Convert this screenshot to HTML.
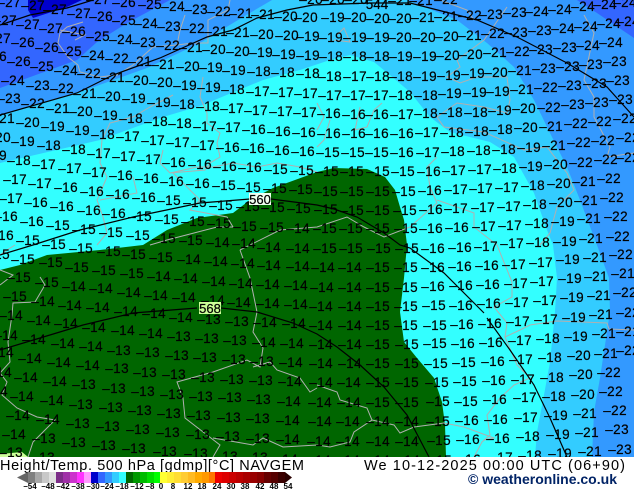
<!DOCTYPE html>
<html><head><meta charset="utf-8"><style>
html,body{margin:0;padding:0;background:#fff;width:634px;height:490px;overflow:hidden}
svg{display:block;font-family:"Liberation Sans",sans-serif}
</style></head><body>
<svg width="634" height="490" viewBox="0 0 634 490" xmlns="http://www.w3.org/2000/svg">
<defs><clipPath id="m"><rect width="634" height="457"/></clipPath></defs>
<g clip-path="url(#m)">
<rect width="634" height="457" fill="#3366ff"/>
<polygon fill="#0000cc" points="28,0 82,0 67,7 33,18 28,10"/>
<polygon fill="#3399ff" points="170,0 127,23 97,42 77,60 0,88 0,457 634,457 634,38 597,13 577,0"/>
<polygon fill="#33ccff" points="272,0 243,17 200,43 147,68 77,93 0,115 0,457 592,457 594,412 600,378 605,345 610,312 609,278 597,245 580,200 567,167 550,133 534,100 514,67 487,43 457,20 407,0"/>
<polygon fill="#33ffff" points="0,163 100,140 163,117 200,106 263,80 300,70 330,60 350,55 374,62 390,75 410,92 430,117 450,132 490,142 514,157 534,193 547,230 553,245 557,278 555,312 550,362 544,395 537,432 535,457 0,457"/>
<polygon fill="#006600" points="0,270 20,265 47,255 100,250 143,245 167,230 197,218 233,213 250,200 273,188 317,172 334,168 367,169 385,177 395,190 400,207 404,220 407,245 404,278 400,312 404,342 417,358 434,378 442,402 445,425 446,457 0,457"/>
<polygon fill="#ccff99" points="0,454 22,452 28,457 0,457"/>
<g fill="none" stroke="#b0b0b0" stroke-width="1">
<polyline points="83,22 67,27 60,33 58,43 68,57 78,65 80,72 100,77 117,75 133,65 153,47 177,45 193,43 208,43 208,20 228,10 230,0"/>
<polyline points="185,15 180,30 177,45"/>
<polyline points="173,95 150,107 133,117 110,123 102,140 100,163 107,177 97,200 103,217 107,233 97,245"/>
<polyline points="203,77 200,97 207,113 207,123 220,133 217,143 220,157 210,163 205,170 170,173 160,163 163,150"/>
<polyline points="170,173 197,167 213,167 233,163 257,167 277,163 300,167 317,172"/>
<polyline points="133,177 137,193 100,200"/>
<polyline points="173,173 190,190 200,200 190,210 227,217 233,227 217,227 167,240 150,245"/>
<polyline points="60,30 85,35 75,40"/>
<polyline points="440,0 467,10 474,20"/>
<polyline points="507,7 484,40 457,60 460,67 447,77 460,83 477,77 507,77 510,100 507,113 484,107 457,103 437,117 444,127 484,132 524,150 547,147 567,173 574,190 557,207 550,233 540,245"/>
<polyline points="584,15 594,33 584,80 594,97 594,117 610,147 607,157 634,153"/>
<polyline points="437,157 427,167 430,187 437,203 410,227 384,237 364,227 347,217 317,227 280,230 240,250"/>
<polyline points="437,200 474,213 474,227 497,245 512,282 512,297 494,307 507,323 505,337 517,365 530,378 514,385 500,398 487,415 490,435 482,442 474,457"/>
<polyline points="360,107 355,130 367,127 374,110 382,103"/>
<polyline points="317,103 324,117 317,130"/>
<polyline points="330,120 324,140 317,147"/>
<polyline points="337,35 344,28 350,42 334,40"/>
<polyline points="505,337 520,330 530,325 557,321 607,323 609,329 634,330"/>
<polyline points="317,385 337,392 340,400 367,408 372,420 354,432 350,442 330,447 317,445 283,447 263,438 253,445 213,438"/>
<polyline points="372,420 394,425 400,433 414,427 444,423 464,427 494,438 484,440"/>
<polyline points="40,277 45,285 35,302 13,303 12,315 8,342 10,362 0,373 7,382 2,395 17,408 37,417 55,420 33,442 28,457"/>
<polyline points="0,255 7,250 15,245"/>
<polyline points="0,270 13,275 0,285"/>
<polyline points="240,250 250,278 257,312 253,332 263,348 260,367 247,360 213,372 177,382 183,398 185,418 207,435 220,445 213,457"/>
<polyline points="253,367 270,362 277,370 300,378 310,392 317,388"/>
</g>
<g fill="none" stroke="#000" stroke-width="1.2">
<polyline points="0,25 30,15 67,8 93,0"/>
<polyline points="0,115 77,93 113,75 160,58 207,37 233,30 257,18 287,10 313,5 370,3 410,3 477,20 517,37 567,63 607,87 634,117"/>
<polyline points="0,255 33,245 80,230 133,217 200,203 250,199"/>
<polyline points="271,199 317,205 334,209 357,217 384,233 400,245 410,248 444,273 484,313"/>
<polyline points="487,318 510,350 534,385 550,418 567,457"/>
<polyline points="0,350 40,338 83,325 133,313 197,308"/>
<polyline points="221,308 257,312 293,323 317,334 337,347 360,365 384,387 407,415 429,457"/>
</g>
<g font-size="13.5" letter-spacing=".4" stroke="#000" stroke-width=".2" text-anchor="end" fill="#000">
<text x="110" y="4">–27</text><text x="136" y="7">–26</text><text x="162" y="9">–25</text><text x="185" y="11">–24</text><text x="208" y="14">–23</text><text x="231" y="16">–22</text><text x="253" y="18">–21</text><text x="275" y="19">–21</text><text x="298" y="21">–20</text><text x="318" y="22">–20</text><text x="345" y="22">–19</text><text x="367" y="22">–20</text><text x="390" y="23">–20</text><text x="412" y="23">–20</text><text x="435" y="22">–21</text><text x="458" y="21">–21</text><text x="482" y="20">–22</text><text x="503" y="19">–23</text><text x="527" y="17">–23</text><text x="549" y="16">–24</text><text x="572" y="14">–24</text><text x="595" y="11">–24</text><text x="617" y="9">–24</text><text x="637" y="7">–24</text>
<text x="323" y="4">–20</text><text x="345" y="4">–20</text><text x="368" y="4">–20</text><text x="412" y="5">–21</text><text x="433" y="5">–21</text><text x="458" y="4">–22</text>
<text x="21" y="7">–27</text><text x="45" y="10">–27</text><text x="67" y="14">–27</text><text x="91" y="18">–27</text><text x="113" y="21">–26</text><text x="136" y="25">–25</text><text x="158" y="28">–24</text><text x="181" y="31">–23</text><text x="205" y="33">–22</text><text x="228" y="36">–21</text><text x="250" y="37">–21</text><text x="274" y="39">–20</text><text x="299" y="40">–20</text><text x="320" y="41">–19</text><text x="343" y="42">–19</text><text x="367" y="42">–19</text><text x="390" y="42">–19</text><text x="412" y="42">–20</text><text x="436" y="42">–20</text><text x="459" y="41">–20</text><text x="482" y="40">–21</text><text x="505" y="38">–22</text><text x="528" y="37">–23</text><text x="552" y="35">–23</text><text x="575" y="33">–24</text><text x="598" y="31">–24</text><text x="621" y="28">–24</text><text x="640" y="26">–24</text>
<text x="17" y="25">–27</text><text x="40" y="29">–27</text><text x="63" y="33">–27</text><text x="86" y="36">–26</text><text x="110" y="41">–25</text><text x="133" y="44">–24</text><text x="156" y="47">–23</text><text x="180" y="50">–22</text><text x="203" y="52">–21</text><text x="226" y="54">–20</text><text x="250" y="56">–20</text><text x="273" y="57">–19</text><text x="296" y="59">–19</text><text x="320" y="60">–19</text><text x="343" y="61">–18</text><text x="367" y="61">–18</text><text x="390" y="61">–18</text><text x="413" y="61">–19</text><text x="437" y="61">–19</text><text x="460" y="60">–20</text><text x="483" y="59">–20</text><text x="507" y="57">–21</text><text x="530" y="56">–22</text><text x="553" y="54">–23</text><text x="577" y="52">–23</text><text x="600" y="50">–24</text><text x="623" y="47">–24</text>
<text x="11" y="43">–27</text><text x="35" y="47">–26</text><text x="59" y="52">–26</text><text x="82" y="56">–25</text><text x="105" y="60">–24</text><text x="129" y="63">–22</text><text x="152" y="66">–21</text><text x="175" y="69">–21</text><text x="200" y="71">–20</text><text x="223" y="72">–19</text><text x="246" y="75">–19</text><text x="271" y="76">–18</text><text x="295" y="77">–18</text><text x="320" y="78">–18</text><text x="342" y="81">–18</text><text x="367" y="81">–17</text><text x="390" y="81">–18</text><text x="413" y="81">–18</text><text x="437" y="81">–19</text><text x="461" y="80">–19</text><text x="485" y="78">–19</text><text x="508" y="77">–20</text><text x="532" y="75">–21</text><text x="556" y="73">–23</text><text x="580" y="71">–23</text><text x="603" y="69">–23</text><text x="627" y="66">–23</text>
<text x="7" y="61">–26</text><text x="31" y="66">–26</text><text x="54" y="71">–25</text><text x="78" y="75">–24</text><text x="101" y="78">–22</text><text x="125" y="82">–21</text><text x="149" y="85">–20</text><text x="173" y="87">–20</text><text x="197" y="90">–19</text><text x="221" y="92">–19</text><text x="245" y="94">–18</text><text x="270" y="96">–17</text><text x="294" y="97">–17</text><text x="318" y="98">–17</text><text x="342" y="100">–17</text><text x="366" y="100">–17</text><text x="389" y="100">–17</text><text x="413" y="100">–18</text><text x="438" y="100">–18</text><text x="462" y="98">–19</text><text x="487" y="97">–19</text><text x="510" y="96">–19</text><text x="534" y="94">–21</text><text x="558" y="92">–22</text><text x="582" y="90">–23</text><text x="607" y="88">–23</text><text x="630" y="85">–23</text>
<text x="25" y="85">–24</text><text x="50" y="90">–23</text><text x="74" y="93">–22</text><text x="97" y="98">–21</text><text x="121" y="101">–20</text><text x="146" y="103">–19</text><text x="171" y="107">–19</text><text x="195" y="109">–18</text><text x="220" y="111">–18</text><text x="244" y="113">–17</text><text x="268" y="115">–17</text><text x="293" y="116">–17</text><text x="317" y="117">–17</text><text x="341" y="118">–16</text><text x="366" y="119">–16</text><text x="389" y="119">–16</text><text x="414" y="119">–17</text><text x="438" y="118">–18</text><text x="463" y="117">–18</text><text x="488" y="117">–18</text><text x="512" y="115">–19</text><text x="536" y="113">–20</text><text x="561" y="112">–22</text><text x="585" y="109">–23</text><text x="609" y="107">–23</text><text x="633" y="104">–23</text>
<text x="21" y="103">–23</text><text x="45" y="108">–22</text><text x="70" y="113">–21</text><text x="93" y="116">–20</text><text x="118" y="120">–19</text><text x="143" y="123">–18</text><text x="168" y="126">–18</text><text x="192" y="128">–18</text><text x="217" y="131">–17</text><text x="241" y="132">–17</text><text x="266" y="134">–16</text><text x="291" y="136">–16</text><text x="316" y="137">–16</text><text x="341" y="138">–16</text><text x="366" y="138">–16</text><text x="389" y="138">–16</text><text x="414" y="138">–16</text><text x="439" y="137">–17</text><text x="464" y="137">–18</text><text x="489" y="136">–18</text><text x="513" y="134">–18</text><text x="538" y="132">–20</text><text x="563" y="131">–21</text><text x="588" y="128">–22</text><text x="612" y="126">–22</text><text x="637" y="123">–22</text>
<text x="15" y="123">–21</text><text x="40" y="127">–20</text><text x="65" y="131">–19</text><text x="90" y="135">–19</text><text x="115" y="139">–18</text><text x="140" y="141">–17</text><text x="165" y="145">–17</text><text x="190" y="147">–17</text><text x="215" y="150">–17</text><text x="240" y="152">–16</text><text x="265" y="153">–16</text><text x="290" y="155">–16</text><text x="315" y="156">–16</text><text x="340" y="157">–15</text><text x="365" y="157">–15</text><text x="389" y="157">–15</text><text x="414" y="157">–16</text><text x="440" y="157">–17</text><text x="465" y="156">–18</text><text x="491" y="155">–18</text><text x="516" y="154">–18</text><text x="541" y="152">–19</text><text x="566" y="150">–21</text><text x="591" y="147">–22</text><text x="615" y="145">–22</text><text x="640" y="142">–22</text>
<text x="11" y="142">–20</text><text x="35" y="146">–19</text><text x="61" y="150">–18</text><text x="86" y="154">–18</text><text x="111" y="158">–17</text><text x="136" y="161">–17</text><text x="161" y="164">–17</text><text x="186" y="167">–16</text><text x="212" y="169">–16</text><text x="237" y="171">–16</text><text x="262" y="172">–16</text><text x="288" y="174">–15</text><text x="314" y="175">–15</text><text x="339" y="176">–15</text><text x="364" y="176">–15</text><text x="390" y="176">–15</text><text x="415" y="176">–15</text><text x="441" y="176">–16</text><text x="466" y="175">–17</text><text x="492" y="174">–17</text><text x="517" y="173">–18</text><text x="543" y="171">–19</text><text x="568" y="169">–20</text><text x="593" y="167">–22</text><text x="618" y="164">–22</text><text x="640" y="162">–22</text>
<text x="7" y="160">–19</text><text x="31" y="165">–18</text><text x="56" y="169">–17</text><text x="82" y="173">–17</text><text x="107" y="177">–17</text><text x="133" y="180">–16</text><text x="159" y="183">–16</text><text x="184" y="186">–16</text><text x="210" y="188">–16</text><text x="236" y="190">–15</text><text x="261" y="192">–15</text><text x="287" y="193">–15</text><text x="313" y="194">–15</text><text x="338" y="196">–15</text><text x="364" y="196">–15</text><text x="390" y="196">–15</text><text x="416" y="196">–15</text><text x="442" y="195">–16</text><text x="468" y="194">–17</text><text x="493" y="193">–17</text><text x="519" y="192">–17</text><text x="545" y="190">–18</text><text x="571" y="188">–20</text><text x="596" y="186">–21</text><text x="621" y="183">–22</text>
<text x="27" y="184">–17</text><text x="52" y="188">–17</text><text x="78" y="192">–16</text><text x="104" y="196">–16</text><text x="130" y="199">–16</text><text x="156" y="202">–16</text><text x="181" y="205">–15</text><text x="207" y="207">–15</text><text x="233" y="210">–15</text><text x="260" y="211">–15</text><text x="285" y="212">–15</text><text x="311" y="213">–15</text><text x="338" y="214">–15</text><text x="364" y="215">–15</text><text x="390" y="215">–15</text><text x="417" y="215">–15</text><text x="443" y="214">–16</text><text x="468" y="213">–17</text><text x="495" y="212">–17</text><text x="521" y="211">–17</text><text x="547" y="209">–18</text><text x="573" y="207">–20</text><text x="598" y="205">–21</text><text x="624" y="202">–22</text>
<text x="23" y="203">–17</text><text x="48" y="207">–16</text><text x="74" y="211">–16</text><text x="101" y="215">–16</text><text x="126" y="218">–16</text><text x="152" y="221">–15</text><text x="179" y="224">–15</text><text x="205" y="226">–15</text><text x="231" y="228">–15</text><text x="257" y="231">–15</text><text x="284" y="232">–15</text><text x="310" y="233">–14</text><text x="337" y="233">–15</text><text x="363" y="233">–15</text><text x="390" y="233">–15</text><text x="418" y="233">–15</text><text x="443" y="233">–16</text><text x="469" y="232">–16</text><text x="496" y="231">–17</text><text x="522" y="230">–17</text><text x="549" y="228">–18</text><text x="575" y="226">–19</text><text x="601" y="223">–21</text><text x="628" y="221">–22</text>
<text x="18" y="221">–16</text><text x="44" y="226">–16</text><text x="70" y="230">–15</text><text x="96" y="234">–15</text><text x="123" y="237">–15</text><text x="150" y="240">–15</text><text x="176" y="243">–15</text><text x="203" y="245">–15</text><text x="230" y="247">–14</text><text x="256" y="248">–14</text><text x="281" y="252">–14</text><text x="310" y="253">–14</text><text x="337" y="253">–15</text><text x="363" y="253">–15</text><text x="391" y="253">–15</text><text x="419" y="253">–15</text><text x="445" y="253">–16</text><text x="472" y="252">–16</text><text x="498" y="251">–17</text><text x="524" y="248">–17</text><text x="550" y="247">–18</text><text x="577" y="246">–19</text><text x="603" y="243">–21</text><text x="630" y="241">–22</text>
<text x="14" y="240">–16</text><text x="40" y="245">–15</text><text x="66" y="249">–15</text><text x="93" y="253">–15</text><text x="121" y="256">–15</text><text x="146" y="259">–15</text><text x="173" y="262">–15</text><text x="201" y="264">–14</text><text x="228" y="266">–14</text><text x="255" y="268">–14</text><text x="281" y="270">–14</text><text x="310" y="271">–14</text><text x="335" y="272">–14</text><text x="362" y="272">–14</text><text x="390" y="272">–15</text><text x="418" y="272">–15</text><text x="445" y="272">–16</text><text x="472" y="271">–16</text><text x="499" y="270">–16</text><text x="526" y="269">–17</text><text x="553" y="267">–17</text><text x="580" y="264">–19</text><text x="607" y="262">–21</text><text x="633" y="259">–22</text>
<text x="10" y="259">–15</text><text x="35" y="264">–15</text><text x="63" y="267">–15</text><text x="89" y="272">–15</text><text x="116" y="275">–15</text><text x="144" y="278">–15</text><text x="171" y="281">–14</text><text x="198" y="283">–14</text><text x="226" y="286">–14</text><text x="253" y="288">–14</text><text x="280" y="289">–14</text><text x="308" y="290">–14</text><text x="334" y="292">–14</text><text x="362" y="292">–14</text><text x="390" y="292">–15</text><text x="418" y="292">–15</text><text x="445" y="291">–16</text><text x="473" y="290">–16</text><text x="500" y="289">–16</text><text x="528" y="288">–17</text><text x="554" y="286">–17</text><text x="582" y="283">–19</text><text x="608" y="281">–21</text><text x="635" y="278">–21</text>
<text x="31" y="282">–15</text><text x="59" y="287">–15</text><text x="86" y="291">–14</text><text x="113" y="293">–14</text><text x="141" y="297">–14</text><text x="168" y="300">–14</text><text x="196" y="302">–14</text><text x="225" y="305">–14</text><text x="251" y="307">–14</text><text x="280" y="308">–14</text><text x="308" y="309">–14</text><text x="333" y="311">–14</text><text x="362" y="311">–14</text><text x="390" y="311">–15</text><text x="418" y="311">–15</text><text x="446" y="310">–15</text><text x="473" y="310">–16</text><text x="501" y="308">–16</text><text x="529" y="307">–17</text><text x="557" y="305">–17</text><text x="584" y="302">–19</text><text x="611" y="300">–21</text><text x="637" y="297">–22</text>
<text x="27" y="301">–15</text><text x="55" y="306">–14</text><text x="82" y="310">–14</text><text x="110" y="312">–14</text><text x="138" y="316">–14</text><text x="166" y="318">–14</text><text x="193" y="322">–14</text><text x="221" y="324">–13</text><text x="249" y="326">–13</text><text x="277" y="327">–14</text><text x="306" y="328">–14</text><text x="333" y="330">–14</text><text x="362" y="330">–14</text><text x="390" y="330">–15</text><text x="418" y="330">–15</text><text x="447" y="330">–15</text><text x="474" y="329">–16</text><text x="502" y="328">–16</text><text x="530" y="326">–17</text><text x="558" y="324">–17</text><text x="586" y="322">–19</text><text x="613" y="319">–21</text><text x="640" y="317">–22</text>
<text x="23" y="320">–14</text><text x="51" y="325">–14</text><text x="78" y="328">–14</text><text x="106" y="332">–14</text><text x="135" y="335">–14</text><text x="163" y="338">–14</text><text x="191" y="341">–13</text><text x="219" y="343">–13</text><text x="247" y="345">–13</text><text x="276" y="347">–14</text><text x="304" y="348">–14</text><text x="333" y="349">–14</text><text x="362" y="349">–14</text><text x="390" y="349">–15</text><text x="419" y="349">–15</text><text x="447" y="348">–15</text><text x="475" y="348">–16</text><text x="503" y="347">–16</text><text x="532" y="345">–17</text><text x="560" y="343">–18</text><text x="588" y="341">–19</text><text x="616" y="338">–21</text><text x="640" y="336">–21</text>
<text x="18" y="340">–14</text><text x="46" y="344">–14</text><text x="75" y="348">–14</text><text x="103" y="351">–14</text><text x="131" y="355">–13</text><text x="160" y="357">–13</text><text x="189" y="360">–13</text><text x="217" y="362">–13</text><text x="246" y="364">–13</text><text x="274" y="366">–13</text><text x="303" y="367">–14</text><text x="333" y="368">–14</text><text x="362" y="368">–14</text><text x="390" y="368">–15</text><text x="419" y="368">–15</text><text x="448" y="368">–15</text><text x="476" y="367">–15</text><text x="505" y="366">–16</text><text x="533" y="364">–17</text><text x="562" y="362">–18</text><text x="591" y="360">–20</text><text x="618" y="358">–21</text><text x="640" y="355">–22</text>
<text x="14" y="357">–14</text><text x="42" y="363">–14</text><text x="71" y="367">–14</text><text x="100" y="370">–14</text><text x="129" y="373">–13</text><text x="157" y="377">–13</text><text x="186" y="379">–13</text><text x="215" y="382">–13</text><text x="244" y="384">–13</text><text x="273" y="385">–13</text><text x="302" y="386">–14</text><text x="333" y="387">–14</text><text x="361" y="387">–14</text><text x="390" y="387">–15</text><text x="419" y="387">–15</text><text x="449" y="387">–15</text><text x="477" y="386">–15</text><text x="506" y="385">–16</text><text x="535" y="384">–17</text><text x="564" y="382">–18</text><text x="593" y="379">–20</text><text x="621" y="377">–22</text>
<text x="12" y="377">–14</text><text x="38" y="382">–14</text><text x="67" y="386">–14</text><text x="96" y="389">–13</text><text x="126" y="393">–13</text><text x="155" y="396">–13</text><text x="184" y="399">–13</text><text x="213" y="401">–13</text><text x="242" y="402">–13</text><text x="271" y="404">–13</text><text x="301" y="406">–14</text><text x="332" y="407">–14</text><text x="361" y="407">–14</text><text x="390" y="407">–15</text><text x="419" y="407">–15</text><text x="450" y="406">–15</text><text x="478" y="406">–15</text><text x="507" y="404">–16</text><text x="537" y="402">–17</text><text x="566" y="401">–18</text><text x="595" y="399">–20</text><text x="623" y="396">–22</text>
<text x="8" y="396">–14</text><text x="34" y="401">–14</text><text x="64" y="405">–14</text><text x="93" y="409">–13</text><text x="123" y="412">–13</text><text x="152" y="415">–13</text><text x="181" y="418">–13</text><text x="211" y="420">–13</text><text x="241" y="422">–13</text><text x="270" y="423">–13</text><text x="300" y="425">–14</text><text x="332" y="426">–14</text><text x="360" y="426">–14</text><text x="390" y="426">–14</text><text x="419" y="426">–14</text><text x="450" y="426">–15</text><text x="479" y="425">–16</text><text x="508" y="424">–16</text><text x="538" y="422">–17</text><text x="568" y="420">–19</text><text x="597" y="418">–21</text><text x="627" y="415">–22</text>
<text x="30" y="420">–14</text><text x="60" y="424">–14</text><text x="90" y="428">–13</text><text x="120" y="431">–13</text><text x="150" y="434">–13</text><text x="180" y="437">–13</text><text x="210" y="439">–13</text><text x="240" y="441">–13</text><text x="270" y="443">–13</text><text x="300" y="444">–14</text><text x="331" y="446">–14</text><text x="360" y="446">–14</text><text x="390" y="446">–14</text><text x="419" y="446">–14</text><text x="451" y="445">–15</text><text x="480" y="444">–16</text><text x="510" y="443">–16</text><text x="540" y="441">–18</text><text x="570" y="439">–19</text><text x="599" y="437">–21</text><text x="629" y="434">–23</text>
<text x="26" y="439">–14</text><text x="56" y="443">–13</text><text x="86" y="447">–13</text><text x="116" y="450">–13</text><text x="146" y="453">–13</text><text x="177" y="456">–13</text><text x="208" y="458">–13</text><text x="238" y="461">–13</text><text x="268" y="462">–13</text><text x="298" y="464">–14</text><text x="331" y="465">–14</text><text x="360" y="465">–14</text><text x="390" y="465">–14</text><text x="420" y="465">–14</text><text x="452" y="465">–15</text><text x="481" y="464">–16</text><text x="513" y="462">–17</text><text x="542" y="460">–18</text><text x="572" y="458">–19</text><text x="602" y="456">–21</text><text x="632" y="454">–23</text>
<text x="23" y="457">–13</text><text x="55" y="462">–13</text>
</g>
<text x="377" y="9" font-size="13.5" stroke="#000" stroke-width=".2" text-anchor="middle">544</text>
<rect x="249" y="193" width="22" height="12" fill="#f0fff0"/>
<text x="260" y="204" font-size="13" stroke="#000" stroke-width=".2" text-anchor="middle">560</text>
<rect x="199" y="302" width="22" height="12" fill="#ccff99"/>
<text x="210" y="313" font-size="13" stroke="#000" stroke-width=".2" text-anchor="middle">568</text>
</g>
<rect y="457" width="634" height="33" fill="#fff"/>
<text x="0" y="470" font-size="14.5" textLength="304" lengthAdjust="spacing">Height/Temp. 500 hPa [gdmp][°C] NAVGEM</text>
<text x="364" y="470" font-size="14.5" textLength="261" lengthAdjust="spacing">We 10-12-2025 00:00 UTC (06+90)</text>
<text x="468" y="484" font-size="14" font-weight="bold" fill="#002366" textLength="149" lengthAdjust="spacing">© weatheronline.co.uk</text>
<polygon points="17,477.5 28,472 28,483" fill="#666"/>
<g>
<rect x="28" y="472" width="7" height="11" fill="#808080"/><rect x="35" y="472" width="7" height="11" fill="#a8a8a8"/><rect x="42" y="472" width="7" height="11" fill="#c8c8c8"/><rect x="49" y="472" width="7" height="11" fill="#e0e0e0"/>
<rect x="56" y="472" width="7" height="11" fill="#7c2d88"/><rect x="63" y="472" width="7" height="11" fill="#a030a8"/><rect x="70" y="472" width="7" height="11" fill="#cc33cc"/><rect x="77" y="472" width="7" height="11" fill="#ff33ff"/><rect x="84" y="472" width="7" height="11" fill="#ff99ff"/>
<rect x="91" y="472" width="7" height="11" fill="#0000cc"/><rect x="98" y="472" width="7" height="11" fill="#3366ff"/><rect x="105" y="472" width="7" height="11" fill="#3399ff"/><rect x="112" y="472" width="7" height="11" fill="#33ccff"/><rect x="119" y="472" width="7" height="11" fill="#33ffff"/>
<rect x="126" y="472" width="7" height="11" fill="#006600"/><rect x="133" y="472" width="7" height="11" fill="#009900"/><rect x="140" y="472" width="7" height="11" fill="#00bb00"/><rect x="147" y="472" width="7" height="11" fill="#00dd00"/><rect x="154" y="472" width="6" height="11" fill="#00ff00"/>
<rect x="160" y="472" width="7" height="11" fill="#ffff33"/><rect x="167" y="472" width="7" height="11" fill="#ffee33"/><rect x="174" y="472" width="7" height="11" fill="#ffdd33"/><rect x="181" y="472" width="7" height="11" fill="#ffcc33"/><rect x="188" y="472" width="7" height="11" fill="#ffbb22"/><rect x="195" y="472" width="7" height="11" fill="#ffaa00"/><rect x="202" y="472" width="7" height="11" fill="#ff9900"/><rect x="209" y="472" width="6" height="11" fill="#ff7700"/>
<rect x="215" y="472" width="7" height="11" fill="#ee0000"/><rect x="222" y="472" width="7" height="11" fill="#dd0000"/><rect x="229" y="472" width="7" height="11" fill="#cc0000"/><rect x="236" y="472" width="7" height="11" fill="#bb0000"/><rect x="243" y="472" width="7" height="11" fill="#aa0000"/><rect x="250" y="472" width="7" height="11" fill="#990000"/><rect x="257" y="472" width="7" height="11" fill="#880000"/><rect x="264" y="472" width="7" height="11" fill="#660000"/><rect x="271" y="472" width="7" height="11" fill="#550000"/><rect x="278" y="472" width="7" height="11" fill="#3a0000"/>
</g>
<polygon points="285,472 292,477.5 285,483" fill="#2a0000"/>
<g font-size="8" font-weight="bold" text-anchor="middle" fill="#000">
<text x="30" y="489">–54</text><text x="48" y="489">–48</text><text x="63" y="489">–42</text><text x="78" y="489">–38</text><text x="93" y="489">–30</text><text x="107" y="489">–24</text><text x="122" y="489">–18</text><text x="137" y="489">–12</text><text x="150" y="489">–8</text><text x="161" y="489">0</text><text x="173" y="489">8</text><text x="188" y="489">12</text><text x="202" y="489">18</text><text x="217" y="489">24</text><text x="231" y="489">30</text><text x="245" y="489">38</text><text x="260" y="489">42</text><text x="274" y="489">48</text><text x="288" y="489">54</text>
</g>
</svg>
</body></html>
